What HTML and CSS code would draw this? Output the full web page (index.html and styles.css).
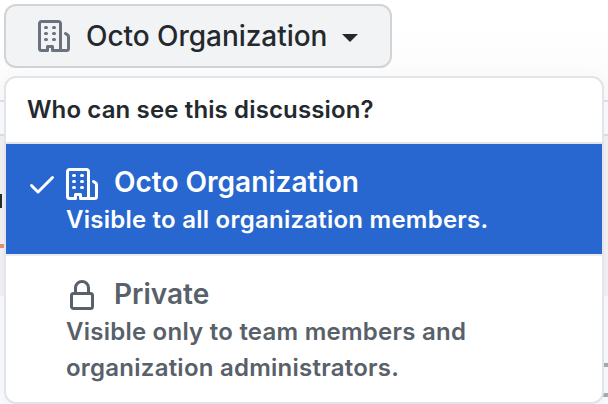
FILE: index.html
```html
<!DOCTYPE html>
<html lang="en">
<head>
<meta charset="utf-8">
<title>Discussion visibility</title>
<link rel="stylesheet" href="styles.css">
</head>
<body>
<svg class="sprite" aria-hidden="true">
  <symbol id="organization" viewBox="0 0 16 16"><path fill-rule="evenodd" d="M1.5 14.25c0 .138.112.25.25.25H4v-1.25a.75.75 0 01.75-.75h2.5a.75.75 0 01.75.75v1.25h2.25a.25.25 0 00.25-.25V1.75a.25.25 0 00-.25-.25h-8.5a.25.25 0 00-.25.25v12.5zM1.75 16A1.75 1.75 0 010 14.25V1.75C0 .784.784 0 1.75 0h8.5C11.216 0 12 .784 12 1.75v12.5c0 .085-.006.168-.018.25h2.268a.25.25 0 00.25-.25V8.285a.25.25 0 00-.111-.208l-1.055-.703a.75.75 0 11.832-1.248l1.055.703c.487.325.779.871.779 1.456v5.965A1.75 1.75 0 0114.25 16h-3.5a.75.75 0 01-.197-.026c-.099.017-.2.026-.303.026h-3a.75.75 0 01-.75-.75V14h-1v1.25a.75.75 0 01-.75.75h-3zM3 3.75A.75.75 0 013.75 3h.5a.75.75 0 010 1.5h-.5A.75.75 0 013 3.75zM3.75 6a.75.75 0 000 1.5h.5a.75.75 0 000-1.5h-.5zM3 9.75A.75.75 0 013.75 9h.5a.75.75 0 010 1.5h-.5A.75.75 0 013 9.75zM7.75 9a.75.75 0 000 1.5h.5a.75.75 0 000-1.5h-.5zM7 6.75A.75.75 0 017.75 6h.5a.75.75 0 010 1.5h-.5A.75.75 0 017 6.75zM7.75 3a.75.75 0 000 1.5h.5a.75.75 0 000-1.5h-.5z"/></symbol>
</svg>
<div class="backdrop">
  <div class="row top"></div>
  <div class="row bar"></div>
  <div class="row tabs"><i class="letter"></i><i class="underline"></i></div>
  <div class="row content"><i class="rule"></i><i class="rule"></i></div>
</div>
<main class="overlay">
  <button class="trigger" type="button">
    <svg class="icon"><use href="#organization"/></svg>
    <span class="trigger-label">Octo Organization</span>
    <span class="caret"></span>
  </button>
  <div class="menu">
    <header class="menu-header">Who can see this discussion?</header>
    <div class="item selected">
      <svg class="icon check" viewBox="0 0 16 16"><path fill-rule="evenodd" d="M13.78 4.22a.75.75 0 010 1.06l-7.25 7.25a.75.75 0 01-1.06 0L2.22 9.28a.75.75 0 011.06-1.06L6 10.94l6.72-6.72a.75.75 0 011.06 0z"/></svg>
      <div class="body">
        <div class="title"><svg class="icon"><use href="#organization"/></svg><span>Octo Organization</span></div>
        <div class="desc">Visible to all organization members.</div>
      </div>
    </div>
    <div class="item">
      <div class="body">
        <div class="title"><svg class="icon" viewBox="0 0 16 16"><path fill-rule="evenodd" d="M4 4v2h-.25A1.75 1.75 0 002 7.75v5.5c0 .966.784 1.75 1.75 1.75h8.5A1.75 1.75 0 0014 13.25v-5.5A1.75 1.75 0 0012.25 6H12V4a4 4 0 10-8 0zm6.5 2V4a2.5 2.5 0 10-5 0v2h5zM12 7.5h.25a.25.25 0 01.25.25v5.5a.25.25 0 01-.25.25h-8.5a.25.25 0 01-.25-.25v-5.5a.25.25 0 01.25-.25H12z"/></svg><span>Private</span></div>
        <div class="desc">Visible only to team members and<br>organization administrators.</div>
      </div>
    </div>
  </div>
</main>
</body>
</html>
```
FILE: styles.css
```css
* { box-sizing: border-box; }
body {
  margin: 0;
  width: 608px;
  height: 404px;
  overflow: hidden;
  position: relative;
  background: #fff;
  color: #24292e;
  font-family: Inter, "Liberation Sans", sans-serif;
}
.sprite { position: absolute; width: 0; height: 0; }
.icon { display: block; flex: none; width: 32px; height: 32px; fill: currentColor; }

.backdrop { height: 404px; }
.top { height: 102px; border-bottom: 2px solid #e0e1e5; background: linear-gradient(#fff 25%, #fafafa); }
.bar { height: 34px; border-bottom: 2px solid #dcdde2; background: #f9fafb; }
.tabs { height: 160px; padding-top: 58px; background: #f0f0f2; }
.letter { display: block; width: 2px; height: 14px; background: #24292e; }
.underline { display: block; width: 4px; height: 4px; margin-top: 36px; background: #e98b7b; }
.content { height: 108px; padding-top: 67px; background: #f8f9fa; }
.rule { display: block; width: 6px; height: 4px; margin: 0 0 26px auto; background: #a5a9b2; }

.overlay { position: absolute; inset: 0; padding: 4px; }
.trigger {
  display: flex;
  align-items: center;
  width: 388px;
  height: 64px;
  padding: 0 32px;
  border: 2px solid #d2d3d5;
  border-radius: 12px;
  background: #f2f3f5;
  color: #24292e;
  font: 500 28px/40px Inter, sans-serif;
}
.trigger .icon { color: #6a737d; }
.trigger-label { width: 241px; margin-left: 16px; text-align: left; letter-spacing: -.04px; white-space: nowrap; }
.caret {
  margin: 4px 0 0 15px;
  border: 8px solid transparent;
  border-top-color: #24292e;
  border-bottom: 0;
}
.menu {
  width: 600px;
  height: 328px;
  margin-top: 8px;
  border: 2px solid #e1e4e8;
  border-radius: 12px;
  background: #fff;
  overflow: hidden;
  box-shadow: 0 2px 16px rgba(149, 157, 165, .06);
}
.menu-header {
  height: 66px;
  padding: 14px 21px;
  border-bottom: 2px solid #e1e4e8;
  font: 600 24px/36px Inter, sans-serif;
  letter-spacing: .13px;
  white-space: nowrap;
}
.item { display: flex; height: 112px; padding: 21px 20px 0 60px; color: #586069; }
.selected {
  padding-left: 20px;
  border-bottom: 2px solid #eaecef;
  background: #2767cf;
  background-clip: padding-box;
  color: #fff;
}
.check { margin: 3px 8px 0 0; }
.title { display: flex; gap: 16px; height: 37px; font: 600 28px/34px Inter, sans-serif; }
.title .icon { margin-top: 3px; }
.desc { font: 600 24px/36px Inter, sans-serif; letter-spacing: .24px; white-space: nowrap; }
```
